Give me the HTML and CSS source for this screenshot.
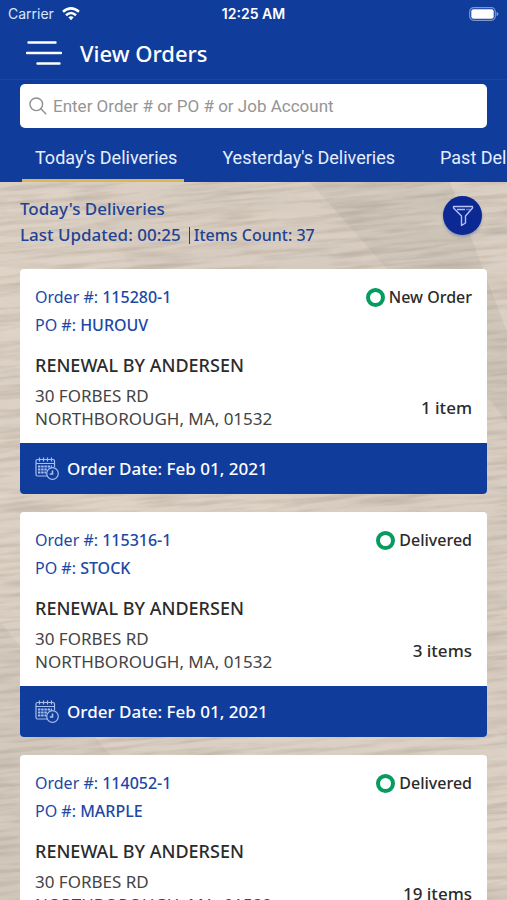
FILE: index.html
```html
<!DOCTYPE html>
<html lang="en">
<head>
<meta charset="utf-8">
<meta name="viewport" content="width=device-width, initial-scale=1">
<title>View Orders</title>
<link rel="stylesheet" href="styles.css">
</head>
<body>
<svg class="symbols" aria-hidden="true">
  <symbol id="calendar" viewBox="0 0 24 24">
    <g fill="none" stroke="#a9c0ee" stroke-width="1.200">
      <path d="M12 19H2.500Q1 19 1 17.500V4Q1 2.500 2.500 2.500H18Q19.500 2.500 19.500 4V10M1 6.500H19.500"/>
      <path d="M4.500 .5V4.500M8.500 .5V4.500M12.500 .5V4.500M16.500 .5V4.500"/>
      <path d="M3 9.500H17M3 12.500H12M3 15.500H11" stroke-width="1.800" stroke-dasharray="2.400 .8"/>
      <circle cx="17.500" cy="16.500" r="5.800"/>
      <path d="M17.500 13.500V17H14.800" stroke-width="1.600"/>
    </g>
  </symbol>
</svg>

<header class="top">
  <div class="status">
    <span class="carrier">Carrier
      <svg width="18" height="14" viewBox="0 0 18 14" aria-hidden="true"><g fill="none" stroke="#fff" stroke-width="2.500"><path d="M1 4.800Q9 -2 17 4.800"/><path d="M4 8.200Q9 3.800 14 8.200"/></g><path d="M6.300 10.300Q9 8.100 11.700 10.300L9 13.200Z" fill="#fff"/></svg>
    </span>
    <span class="time">12:25 AM</span>
    <span class="battery"><svg width="30" height="14" viewBox="0 0 30 14" aria-hidden="true"><rect x=".7" y=".7" width="25.600" height="12.600" rx="4" fill="none" stroke="#7d96d2" stroke-width="1.200"/><rect x="2.300" y="2.300" width="22.400" height="9.400" rx="2.200" fill="#fff"/><path d="M27.500 4.800Q29.500 5.500 29.500 7T27.500 9.200Z" fill="#7d96d2"/></svg></span>
  </div>
  <div class="title-bar">
    <button class="menu" type="button" aria-label="Menu"><svg width="36" height="26" viewBox="0 0 36 26"><path d="M2.500 2.500H29.500M1 13H35M11.500 23.500H33.500" stroke="#fff" stroke-width="2.400" stroke-linecap="round"/></svg></button>
    <h1>View Orders</h1>
  </div>
  <label class="search">
    <svg width="18" height="18" viewBox="0 0 18 18" aria-hidden="true"><g fill="none" stroke="#8f8f8f" stroke-width="1.400" stroke-linecap="round"><circle cx="7.300" cy="7.300" r="6.300"/><path d="M11.800 11.800L16.800 16.800"/></g></svg>
    <input type="search" aria-label="Search orders" placeholder="Enter Order # or PO # or Job Account">
  </label>
  <nav class="tabs">
    <a class="active" href="#today">Today's Deliveries</a>
    <a href="#yesterday">Yesterday's Deliveries</a>
    <a href="#past">Past Deliveries</a>
  </nav>
</header>

<main id="today">
  <svg class="wood" aria-hidden="true" preserveAspectRatio="none" viewBox="0 0 507 718">
    <defs>
      <filter id="grain" x="0" y="0" width="100%" height="100%" color-interpolation-filters="sRGB">
        <feTurbulence type="fractalNoise" baseFrequency=".014 .2" numOctaves="4" seed="8"/>
        <feColorMatrix values="0 0 0 0 .52  0 0 0 0 .46  0 0 0 0 .41  1.300 0 0 0 -.54"/>
      </filter>
      <filter id="light" x="0" y="0" width="100%" height="100%" color-interpolation-filters="sRGB">
        <feTurbulence type="fractalNoise" baseFrequency=".01 .06" numOctaves="3" seed="21"/>
        <feColorMatrix values="0 0 0 0 .91  0 0 0 0 .86  0 0 0 0 .80  1.600 0 0 0 -.56"/>
      </filter>
    </defs>
    <rect width="507" height="718" fill="#dacfc3"/>
    <path d="M60 0L136 88L300 330L507 560V0Z" fill="#d6cbbf"/>
    <path d="M310 0L388 88L507 240V0Z" fill="#cbc2b6"/>
    <path d="M450 0L507 150V0Z" fill="#d8cdc1"/>
    <path d="M0 440L230 718H0Z" fill="#d0c6ba"/>
    <g transform="rotate(-5 253 359)"><rect x="-60" y="-60" width="640" height="840" filter="url(#light)" opacity=".5"/><rect x="-60" y="-60" width="640" height="840" filter="url(#grain)" opacity=".45"/></g>
  </svg>

  <section class="summary">
    <div>
      <h2>Today's Deliveries</h2>
      <p>Last Updated: 00:25<span class="count">Items Count: 37</span></p>
    </div>
    <button class="filter" type="button" aria-label="Filter"><svg width="22" height="22" viewBox="0 0 22 22"><g fill="none" stroke="#b4c3f5" stroke-width="1.400" stroke-linejoin="round"><path d="M1.500 1.500H20.500V3L13.500 11V18L9.500 20.500V11L1.500 3Z"/><path d="M5 4.500H13M14.500 4.500H15.500M16.500 4.500H17.500"/></g></svg></button>
  </section>

  <article class="card">
    <div class="body">
      <div class="row"><p class="ref">Order #: <b>115280-1</b></p><p class="state">New Order</p></div>
      <p class="ref">PO #: <b>HUROUV</b></p>
      <h3>RENEWAL BY ANDERSEN</h3>
      <div class="row"><address>30 FORBES RD<br>NORTHBOROUGH, MA, 01532</address><p class="items">1 item</p></div>
    </div>
    <footer><svg width="24" height="24" aria-hidden="true"><use href="#calendar"/></svg>Order Date: Feb 01, 2021</footer>
  </article>

  <article class="card">
    <div class="body">
      <div class="row"><p class="ref">Order #: <b>115316-1</b></p><p class="state">Delivered</p></div>
      <p class="ref">PO #: <b>STOCK</b></p>
      <h3>RENEWAL BY ANDERSEN</h3>
      <div class="row"><address>30 FORBES RD<br>NORTHBOROUGH, MA, 01532</address><p class="items">3 items</p></div>
    </div>
    <footer><svg width="24" height="24" aria-hidden="true"><use href="#calendar"/></svg>Order Date: Feb 01, 2021</footer>
  </article>

  <article class="card">
    <div class="body">
      <div class="row"><p class="ref">Order #: <b>114052-1</b></p><p class="state">Delivered</p></div>
      <p class="ref">PO #: <b>MARPLE</b></p>
      <h3>RENEWAL BY ANDERSEN</h3>
      <div class="row"><address>30 FORBES RD<br>NORTHBOROUGH, MA, 01532</address><p class="items">19 items</p></div>
    </div>
    <footer><svg width="24" height="24" aria-hidden="true"><use href="#calendar"/></svg>Order Date: Feb 01, 2021</footer>
  </article>
</main>
</body>
</html>
```
FILE: styles.css
```css
*,
*::before {
  box-sizing: border-box;
}

body,
h1,
h2,
h3,
p {
  margin: 0;
}

body {
  display: flex;
  flex-direction: column;
  height: 100vh;
  overflow: hidden;
  background: #d6cabc;
  color: #2b2b2b;
  font-family: "Noto Sans", sans-serif;
  font-size: 16px;
}

button {
  display: grid;
  place-items: center;
  padding: 0;
  border: 0;
  background: none;
}

.symbols {
  position: absolute;
  width: 0;
  height: 0;
}

.top {
  flex: none;
  background: #103d9c;
  color: #fff;
}

.status {
  display: grid;
  grid-template-columns: 1fr auto 1fr;
  align-items: center;
  height: 27px;
  padding: 0 8px;
  font-family: Inter, sans-serif;
  font-size: 14px;
}

.carrier {
  display: flex;
  align-items: center;
  gap: 8px;
  color: #dce5fa;
}

.time {
  font-weight: 600;
}

.battery {
  display: flex;
  justify-content: flex-end;
}

.title-bar {
  display: flex;
  align-items: center;
  gap: 18px;
  height: 53px;
  padding: 0 26px;
  border-bottom: 1px solid #1a46a3;
}

h1 {
  font-size: 22px;
  font-weight: 500;
  line-height: 50px;
}

.search {
  display: flex;
  align-items: center;
  gap: 6px;
  height: 44px;
  margin: 4px 20px 0;
  padding: 0 9px;
  border-radius: 5px;
  background: #fff;
}

.search svg {
  flex: none;
}

.search input {
  flex: 1;
  min-width: 0;
  padding: 0;
  border: 0;
  outline: 0;
  background: none;
  font-family: Roboto, sans-serif;
  font-size: 17px;
}

.search input::placeholder {
  color: #959595;
}

.tabs {
  display: flex;
  gap: 25px;
  height: 54px;
  padding: 0 22px;
  overflow: hidden;
}

.tabs a {
  flex: none;
  padding: 6px 7px 0 13px;
  border-bottom: 3px solid transparent;
  color: #e6edff;
  font-family: Roboto, sans-serif;
  font-size: 18px;
  line-height: 48px;
  text-decoration: none;
}

.tabs .active {
  border-color: #dfb650;
}

main {
  position: relative;
  flex: 1;
  display: flex;
  flex-direction: column;
  gap: 18px;
  min-height: 0;
  padding: 14px 20px 0;
  overflow: hidden;
}

.wood {
  position: absolute;
  inset: 0;
  width: 100%;
  height: 100%;
}

.summary {
  position: relative;
  flex: none;
  display: flex;
  justify-content: space-between;
  height: 55px;
  padding-right: 5px;
  color: #1f4394;
}

.summary h2,
.summary p {
  font-size: 17px;
  font-weight: 500;
  line-height: 26px;
}

.summary .count {
  display: inline-block;
  margin-left: 8px;
  padding-left: 4px;
  border-left: 1px solid #1f4394;
  font-size: 16px;
  line-height: 17px;
}

.filter {
  width: 39px;
  height: 39px;
  border-radius: 50%;
  background: #0b2893;
  box-shadow: 0 2px 3px #5a68a580;
}

.card {
  position: relative;
  flex: none;
  overflow: hidden;
  border-radius: 4px;
  background: #fff;
}

.body {
  padding: 14px 15px 13px;
}

.row {
  display: flex;
  align-items: center;
  justify-content: space-between;
}

.ref {
  color: #1c48a4;
  line-height: 28px;
}

.ref b,
.state,
.items {
  font-weight: 500;
}

.items {
  font-size: 17px;
}

.state {
  display: flex;
  align-items: center;
  gap: 4px;
}

.state::before {
  content: "";
  width: 19px;
  height: 19px;
  border: 4px solid #079b5f;
  border-radius: 50%;
}

h3 {
  margin: 12px 0 5px;
  font-size: 18px;
  font-weight: 500;
  line-height: 28px;
}

address {
  color: #444;
  font-size: 17px;
  font-style: normal;
  line-height: 23px;
}

.card footer {
  display: flex;
  align-items: center;
  gap: 8px;
  height: 51px;
  padding: 0 15px;
  background: #103d9c;
  color: #fff;
  font-weight: 500;
  font-size: 17px;
}
```
